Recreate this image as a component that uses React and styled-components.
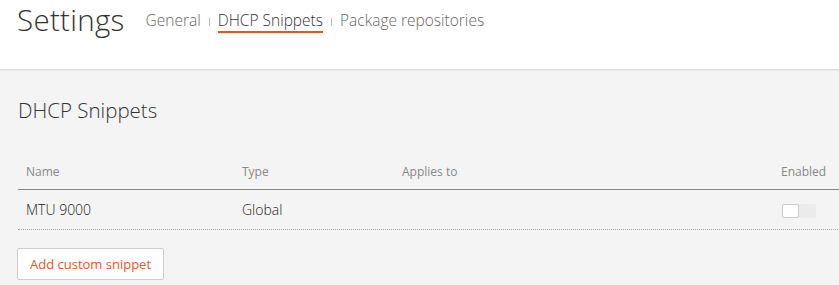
import styled, { createGlobalStyle } from "styled-components";

const Global = createGlobalStyle`
  html, body {
    margin: 0;
    padding: 0;
    background: #f4f4f4;
    overflow: hidden;
  }
  * { box-sizing: border-box; }
`;

const snippets = [
  { name: "MTU 9000", type: "Global", applies: "", enabled: false },
];

export default function App() {
  return (
    <Page>
      <Global />
      <Header>
        <Title>Settings</Title>
        <Nav>
          <NavLink>General</NavLink>
          <Sep />
          <NavLink active>DHCP Snippets</NavLink>
          <Sep />
          <NavLink>Package repositories</NavLink>
        </Nav>
      </Header>
      <Content>
        <SectionTitle>DHCP Snippets</SectionTitle>
        <Table>
          <HeadRow>
            <HeadCell>Name</HeadCell>
            <HeadCell>Type</HeadCell>
            <HeadCell>Applies to</HeadCell>
            <HeadCell>Enabled</HeadCell>
          </HeadRow>
          {snippets.map((s) => (
            <Row key={s.name}>
              <Cell>{s.name}</Cell>
              <Cell>{s.type}</Cell>
              <Cell>{s.applies}</Cell>
              <Cell>
                <Switch on={s.enabled}>
                  <Knob on={s.enabled} />
                </Switch>
              </Cell>
            </Row>
          ))}
        </Table>
        <AddButton>Add custom snippet</AddButton>
      </Content>
    </Page>
  );
}

const Page = styled.div`
  width: 839px;
  height: 285px;
  font-family: "Open Sans", "Noto Sans", sans-serif;
  color: #333;
  overflow: hidden;
`;

const Header = styled.header`
  height: 70px;
  background: #fff;
  border-bottom: 1px solid #dcdcdc;
  box-shadow: 0 1px 1px rgba(0, 0, 0, 0.04);
  display: flex;
  align-items: flex-start;
  padding: 0 0 0 17px;
`;

const Title = styled.h1`
  margin: 0;
  font-size: 29.5px;
  font-weight: 300;
  line-height: 40px;
  color: #333;
  letter-spacing: 0.3px;
`;

const Nav = styled.nav`
  display: flex;
  align-items: center;
  margin-left: 21px;
  margin-top: 3px;
  height: 34px;
  padding-bottom: 4px;
`;

const NavLink = styled.span`
  font-size: 15.5px;
  font-weight: 300;
  color: ${(p) => (p.active ? "#333" : "#666")};
  line-height: 20px;
  padding: 6px 0 1px;
  border-bottom: 2px solid ${(p) => (p.active ? "#e95420" : "transparent")};
`;

const Sep = styled.span`
  width: 1px;
  height: 8px;
  background: #bbb;
  margin: 8px 8px 0;
`;

const Content = styled.main`
  padding: 27px 0 0 18px;
`;

const SectionTitle = styled.h2`
  margin: 0;
  font-size: 20.5px;
  font-weight: 300;
  line-height: 26px;
  color: #333;
`;

const Table = styled.div`
  width: 830px;
  margin-top: 37px;
`;

const cols = "216px 160px 379px 1fr";

const HeadRow = styled.div`
  display: grid;
  grid-template-columns: ${cols};
  height: 30px;
  padding-top: 4px;
  border-bottom: 1px solid #888;
`;

const HeadCell = styled.div`
  font-size: 12px;
  font-weight: 400;
  color: #888;
  padding: 0 0 0 8px;
  line-height: 16px;
`;

const Row = styled.div`
  display: grid;
  grid-template-columns: ${cols};
  height: 40px;
  align-items: center;
  border-bottom: 1px dotted #aaa;
`;

const Cell = styled.div`
  font-size: 14px;
  font-weight: 300;
  color: #222;
  padding: 0 0 0 8px;
`;

const Switch = styled.span`
  display: inline-flex;
  width: 34px;
  height: 14px;
  border-radius: 2px;
  background: ${(p) => (p.on ? "#e95420" : "#ebebeb")};
  justify-content: ${(p) => (p.on ? "flex-end" : "flex-start")};
  margin-left: 1px;
  vertical-align: middle;
`;

const Knob = styled.span`
  width: 17px;
  height: 14px;
  background: #fff;
  border: 1px solid #ccc;
  border-radius: 2px;
`;

const AddButton = styled.button`
  margin-top: 18px;
  height: 32px;
  padding: 0 12px;
  background: #fff;
  border: 1px solid #ccc;
  border-radius: 2px;
  font-family: inherit;
  font-size: 13px;
  font-weight: 400;
  color: #e95420;
  margin-left: -1px;
`;
